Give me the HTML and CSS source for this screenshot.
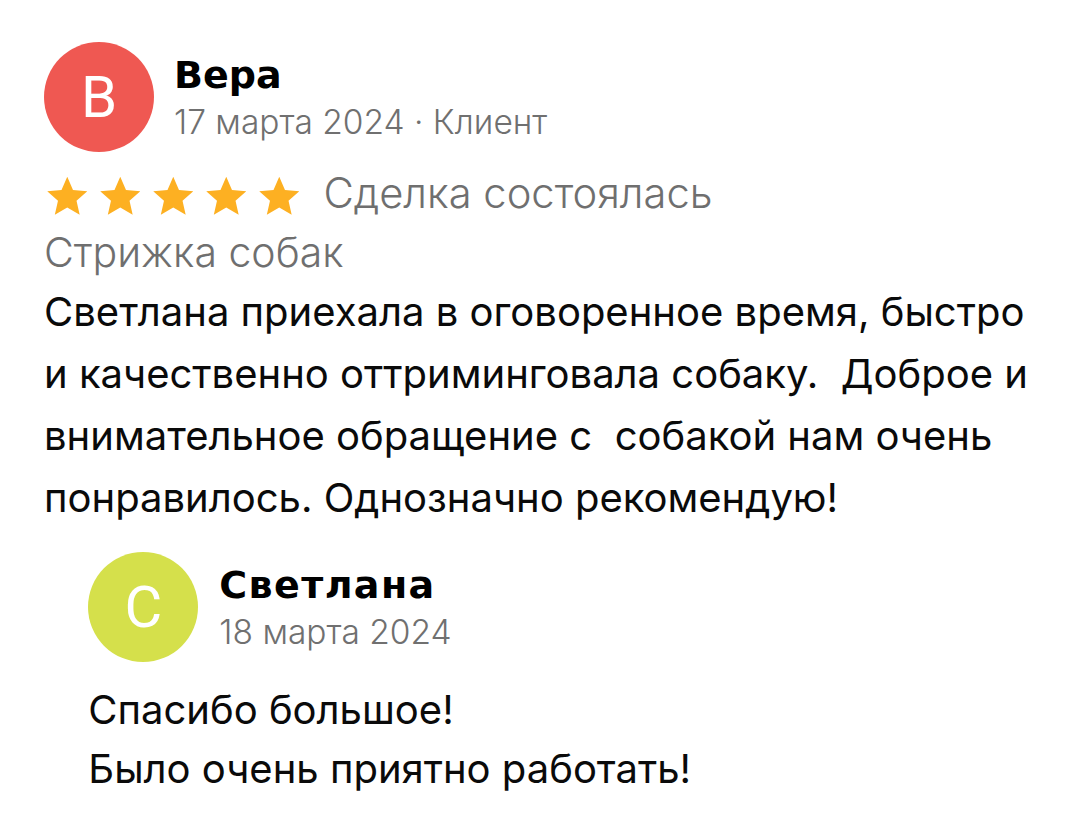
FILE: index.html
```html
<!DOCTYPE html>
<html lang="ru">
<head>
<meta charset="utf-8">
<link rel="stylesheet" href="styles.css">
</head>
<body>
<div class="review">
  <div class="head">
    <div class="avatar red">В</div>
    <div class="meta">
      <div class="name">Вера</div>
      <div class="date">17 марта 2024 · Клиент</div>
    </div>
  </div>
  <div class="rating">
    <div class="stars">
      <svg class="star" viewBox="0 0 24 24"><path d="M12 1.5l3.1 7.1 7.7.7-5.8 5.1 1.7 7.6L12 18.1 5.3 22l1.7-7.6L1.2 9.3l7.7-.7z"/></svg>
      <svg class="star" viewBox="0 0 24 24"><path d="M12 1.5l3.1 7.1 7.7.7-5.8 5.1 1.7 7.6L12 18.1 5.3 22l1.7-7.6L1.2 9.3l7.7-.7z"/></svg>
      <svg class="star" viewBox="0 0 24 24"><path d="M12 1.5l3.1 7.1 7.7.7-5.8 5.1 1.7 7.6L12 18.1 5.3 22l1.7-7.6L1.2 9.3l7.7-.7z"/></svg>
      <svg class="star" viewBox="0 0 24 24"><path d="M12 1.5l3.1 7.1 7.7.7-5.8 5.1 1.7 7.6L12 18.1 5.3 22l1.7-7.6L1.2 9.3l7.7-.7z"/></svg>
      <svg class="star" viewBox="0 0 24 24"><path d="M12 1.5l3.1 7.1 7.7.7-5.8 5.1 1.7 7.6L12 18.1 5.3 22l1.7-7.6L1.2 9.3l7.7-.7z"/></svg>
    </div>
    <span class="deal">Сделка состоялась</span>
  </div>
  <div class="service">Стрижка собак</div>
  <p class="text">Светлана приехала в оговоренное время, быстро<br>и качественно оттриминговала собаку.&nbsp; Доброе и<br>внимательное обращение с&nbsp; собакой нам очень<br>понравилось. Однозначно рекомендую!</p>
  <div class="reply">
    <div class="head">
      <div class="avatar lime">С</div>
      <div class="meta">
        <div class="name">Светлана</div>
        <div class="date">18 марта 2024</div>
      </div>
    </div>
    <p class="reply-text">Спасибо большое!<br>Было очень приятно работать!</p>
  </div>
</div>
</body>
</html>
```
FILE: styles.css
```css
html, body {
  margin: 0;
  padding: 0;
  background: #ffffff;
}
body {
  font-family: Inter, "Noto Sans", sans-serif;
  color: #000;
  width: 1080px;
  height: 840px;
  overflow: hidden;
}
.review {
  padding: 42px 0 0 44px;
}
.head {
  display: flex;
  align-items: flex-start;
  gap: 20px;
}
.avatar {
  width: 110px;
  height: 110px;
  border-radius: 50%;
  display: flex;
  align-items: center;
  justify-content: center;
  color: #fff;
  font-family: Roboto, sans-serif;
  font-size: 58px;
  font-weight: 400;
  flex: none;
}
.red { background: #ef5852; }
.lime { background: #d5e04b; }
.meta {
  display: flex;
  flex-direction: column;
  margin-top: 10.5px;
}
.name {
  font-family: "DejaVu Sans", sans-serif;
  font-size: 38px;
  font-weight: 700;
  line-height: 44px;
  white-space: nowrap;
}
.date {
  margin-top: 5.8px;
  font-size: 33.5px;
  font-weight: 300;
  color: #707070;
  line-height: 40px;
  white-space: nowrap;
}
.reply .name { letter-spacing: 1.4px; }
.rating {
  display: flex;
  align-items: flex-start;
  margin-top: 19.1px;
  gap: 22px;
}
.stars {
  display: flex;
  gap: 8.5px;
  margin-top: 3.1px;
  margin-left: 0.9px;
}
.star {
  width: 44.5px;
  height: 44.5px;
  fill: #fdb022;
  flex: none;
}
.deal, .service {
  font-size: 41px;
  font-weight: 300;
  line-height: 44px;
  color: #6f6f6f;
  white-space: nowrap;
}
.deal { font-size: 41.7px; }
.service {
  margin-top: 10.9px;
}
.text {
  margin: 7.4px 0 0;
  font-size: 40px;
  line-height: 62px;
  white-space: nowrap;
  color: #0a0a0a;
}
.reply {
  padding-left: 44.3px;
  margin-top: 23.2px;
}
.reply .head { gap: 21px; }
.reply-text {
  margin: 18.3px 0 0;
  font-size: 40px;
  line-height: 59px;
  white-space: nowrap;
  color: #0a0a0a;
}
```
